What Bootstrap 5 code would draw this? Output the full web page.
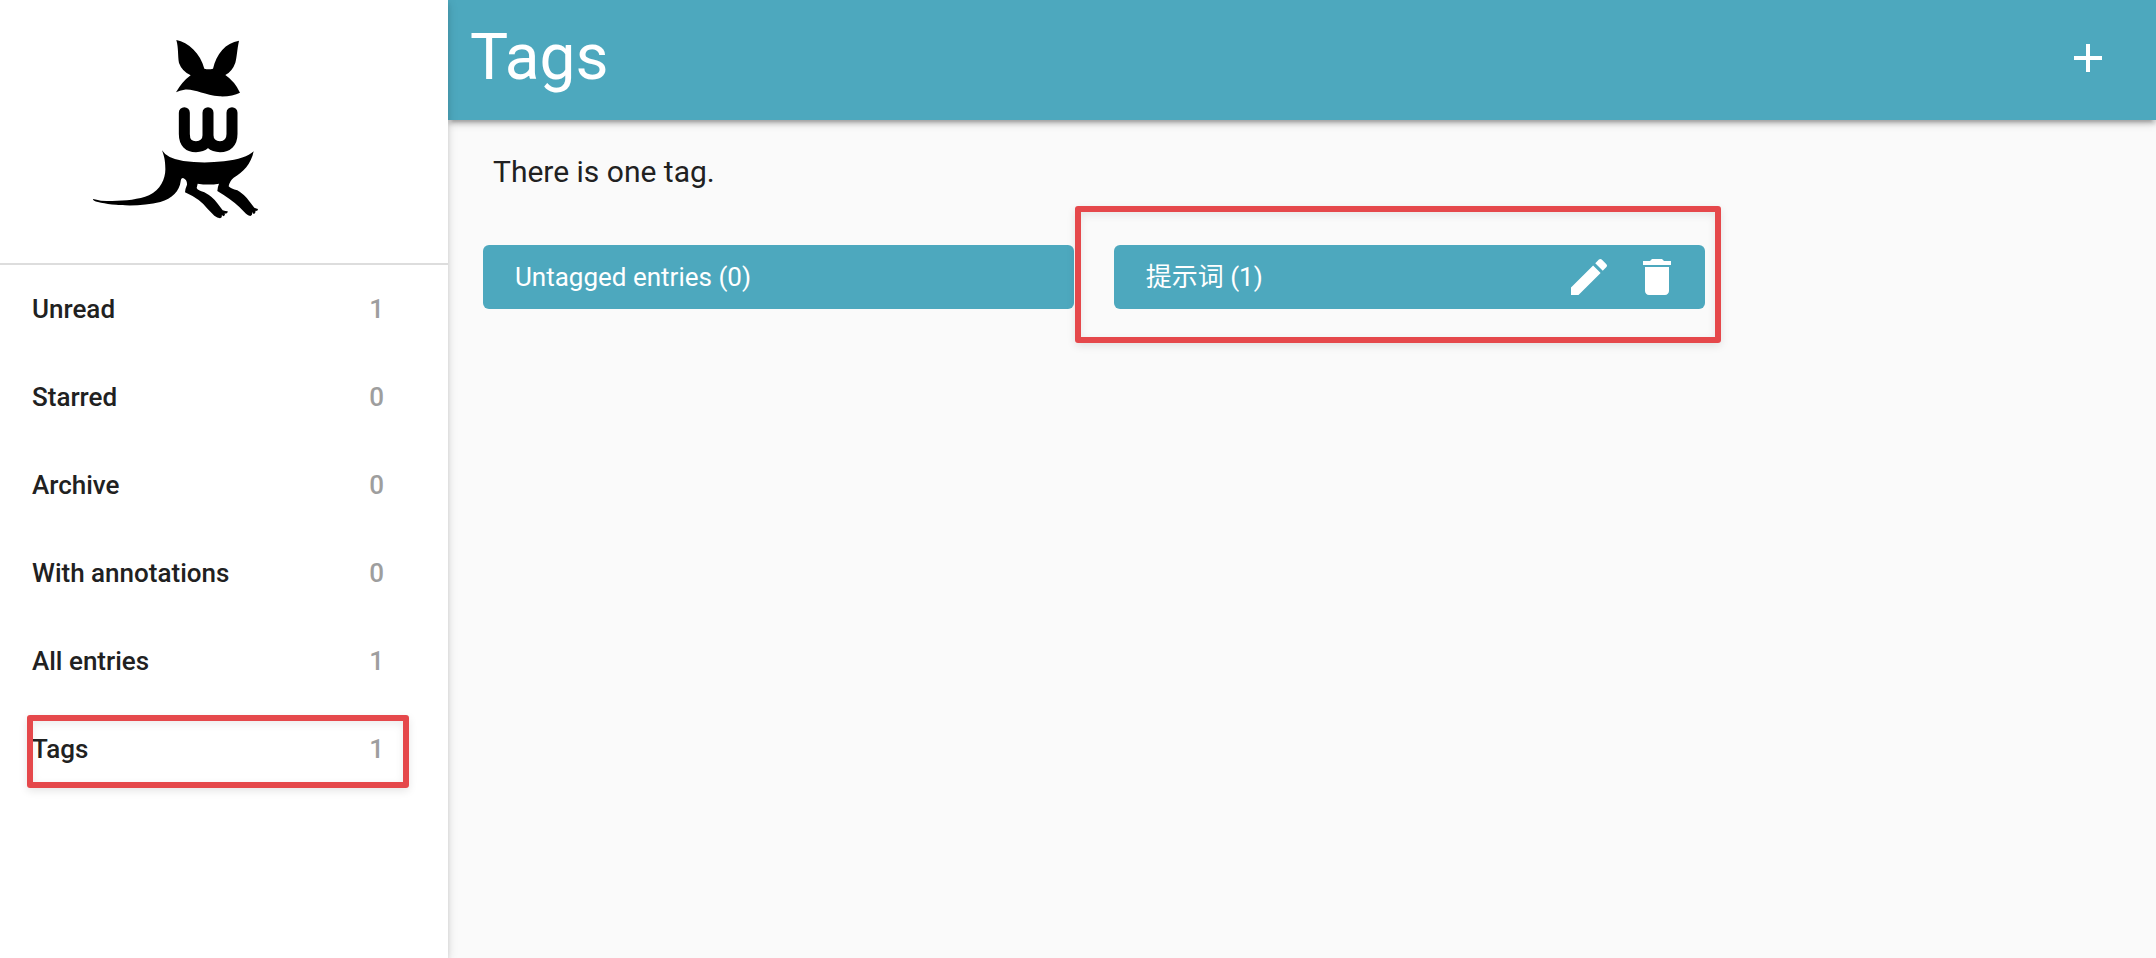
<!DOCTYPE html>
<html lang="en">
<head>
<meta charset="utf-8">
<meta name="viewport" content="width=device-width, initial-scale=1">
<title>Tags</title>
<link rel="stylesheet" href="https://cdn.jsdelivr.net/npm/bootstrap@5.3.0/dist/css/bootstrap.min.css">
<style>
  :root { --teal: #4da8be; --marker: #e5484b; --ink: #212121; }
  body { background: #fafafa; color: var(--ink); font-family: Roboto, "Noto Sans CJK SC", sans-serif; font-size: 26px; line-height: 40px; }
  .sidebar { width: 448px; z-index: 2; box-shadow: 0 4px 4px rgba(0,0,0,.1), 0 2px 10px rgba(0,0,0,.14); }
  .brand { padding: 30px 80px 32px; border-bottom: 2px solid #ddd; }
  .side-link { height: 88px; padding: 0 64px 0 32px; color: var(--ink); font-weight: 500; }
  .count { color: #9e9e9e; }
  .topbar { background: var(--teal); height: 120px; padding: 0 44px 0 22px; box-shadow: 0 4px 4px rgba(0,0,0,.14), 0 6px 2px -4px rgba(0,0,0,.12), 0 2px 10px rgba(0,0,0,.2); }
  .topbar h1 { font-size: 64px; line-height: 72px; font-weight: 400; padding-bottom: 4px; }
  .topbar .btn { margin-bottom: 4px; }
  .content { padding: 32px 32px 32px 35px; }
  .summary { font-size: 30px; padding-left: 10px; margin-bottom: 53px; }
  .tag-grid { display: grid; grid-template-columns: 36% 36%; gap: 40px; }
  .tag-card { background: var(--teal); height: 64px; padding: 0 24px 0 32px; border-radius: 6px; }
  .tag-card a { color: #fff; }
  .tag-actions { gap: 20px; }
  .marker { border: 6px solid var(--marker); border-radius: 3px; pointer-events: none; box-shadow: 0 3px 8px rgba(0,0,0,.1), inset 0 3px 8px rgba(0,0,0,.08); }
  .marker-nav { inset: 10px 39px 5px 27px; }
  .marker-card { inset: -39px -16px -34px -39px; }
</style>
</head>
<body>
<div class="d-flex min-vh-100">
  <aside class="sidebar bg-white flex-shrink-0 position-relative">
    <a class="brand d-block" href="#" aria-label="Home">
      <svg class="d-block" width="190" height="201" viewBox="0 0 570 603" aria-hidden="true">
        <path d="M289 30C325 37 361 70 373 116Q386 119 399 116C409 72 437 38 477 32C471 60 471 80 466 98Q457 124 436 135Q464 154 480 188C465 196 443 200 419 199C370 195 345 176 313 179Q299 181 288 187Q307 154 332 136Q306 124 297 99C293 78 296 54 289 30Z"/>
        <path d="M313 248V312C313 338 326 350 348 350C370 350 384 338 384 316V248V316C384 338 398 350 420 350C442 350 456 338 456 312V248" fill="none" stroke="#000" stroke-width="33" stroke-linecap="round" stroke-linejoin="round"/>
        <path d="M246 361Q261 386 310 393Q368 401 432 394Q497 387 521 364C514 401 489 428 461 443Q449 452 446 469Q453 477 472 481Q493 493 509 515L523 533Q529 536 534 537Q534 543 528 543L526 542Q528 549 521 552L516 546Q519 555 511 558Q504 557 498 551L478 531Q455 509 412 483Q413 470 417 461Q386 466 353 461L350 474Q353 481 373 487Q399 501 412 520L428 541Q436 544 443 544Q444 550 437 551L434 549Q437 556 430 559L425 554Q428 562 420 565Q412 563 403 557L381 535Q360 507 315 487Q316 475 321 464Q322 449 309 444Q303 444 302 454C299 483 276 506 241 516C180 532 95 527 54 516Q38 513 39 507Q49 509 63 512C113 515 168 512 207 496C243 480 257 443 256 416C256 391 252 377 246 361Z"/>
      </svg>
    </a>
    <nav class="nav flex-column">
      <a class="side-link d-flex align-items-center justify-content-between text-decoration-none" href="#"><span>Unread</span><span class="count">1</span></a>
      <a class="side-link d-flex align-items-center justify-content-between text-decoration-none" href="#"><span>Starred</span><span class="count">0</span></a>
      <a class="side-link d-flex align-items-center justify-content-between text-decoration-none" href="#"><span>Archive</span><span class="count">0</span></a>
      <a class="side-link d-flex align-items-center justify-content-between text-decoration-none" href="#"><span>With annotations</span><span class="count">0</span></a>
      <a class="side-link d-flex align-items-center justify-content-between text-decoration-none" href="#"><span>All entries</span><span class="count">1</span></a>
      <a class="side-link d-flex align-items-center justify-content-between text-decoration-none position-relative" href="#" aria-current="page"><span>Tags</span><span class="count">1</span><span class="marker marker-nav position-absolute"></span></a>
    </nav>
  </aside>
  <div class="flex-grow-1">
    <header class="topbar d-flex align-items-center justify-content-between text-white">
      <h1 class="m-0">Tags</h1>
      <button class="btn p-0 border-0 text-white" type="button" aria-label="Add">
        <svg class="d-block" width="48" height="48" viewBox="0 0 24 24" fill="currentColor"><path d="M19 13h-6v6h-2v-6H5v-2h6V5h2v6h6z"/></svg>
      </button>
    </header>
    <main class="content">
      <p class="summary">There is one tag.</p>
      <div class="tag-grid">
        <div class="tag-card d-flex align-items-center"><a class="text-decoration-none" href="#">Untagged entries (0)</a></div>
        <div class="tag-card d-flex align-items-center justify-content-between position-relative">
          <a class="text-decoration-none" href="#">提示词 (1)</a>
          <div class="tag-actions d-flex">
            <button class="btn p-0 border-0 text-white" type="button" aria-label="Edit">
              <svg class="d-block" width="48" height="48" viewBox="0 0 24 24" fill="currentColor"><path d="M3 17.25V21h3.75L17.81 9.94l-3.75-3.75zM20.71 7.04a1 1 0 0 0 0-1.41l-2.34-2.34a1 1 0 0 0-1.41 0l-1.83 1.83 3.75 3.75z"/></svg>
            </button>
            <button class="btn p-0 border-0 text-white" type="button" aria-label="Delete">
              <svg class="d-block" width="48" height="48" viewBox="0 0 24 24" fill="currentColor"><path d="M6 19c0 1.100.9 2 2 2h8c1.100 0 2-.9 2-2V7H6zM19 4h-3.500l-1-1h-5l-1 1H5v2h14z"/></svg>
            </button>
          </div>
          <span class="marker marker-card position-absolute"></span>
        </div>
      </div>
    </main>
  </div>
</div>
<script src="https://cdn.jsdelivr.net/npm/bootstrap@5.3.0/dist/js/bootstrap.bundle.min.js"></script>
</body>
</html>
